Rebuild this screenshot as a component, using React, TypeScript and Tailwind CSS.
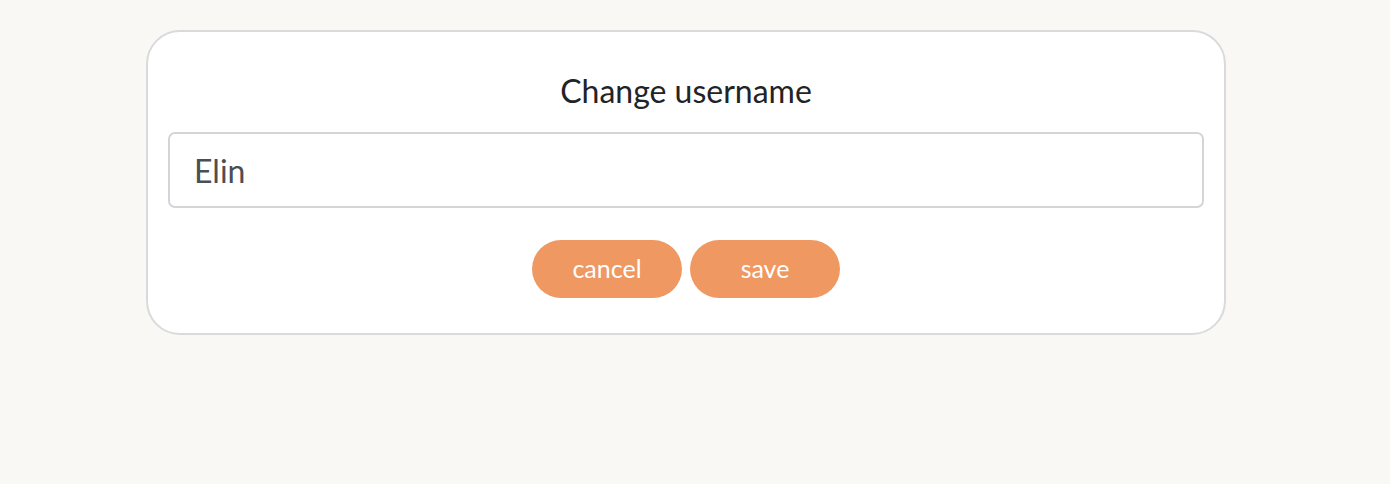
export default function App() {
  return (
    <div className="min-h-[484px] bg-[#f9f8f5] pt-[30px] font-['Lato','Liberation_Sans',sans-serif]">
      <div className="ml-[146px] w-[1080px] rounded-[34px] border-2 border-[#dadadc] bg-white px-[20px] pb-[35px] pt-[42px]">
        <h2 className="mb-[24px] text-center text-[32px] leading-[34px] font-normal text-[#222326]">
          Change username
        </h2>
        <input
          defaultValue="Elin"
          className="block h-[76px] w-full rounded-[7px] border-2 border-[#d3d5d8] px-[24px] text-[32px] text-[#4a4f55] outline-none"
        />
        <div className="mt-[32px] flex justify-center gap-[8px]">
          <button className="h-[58px] w-[150px] rounded-full bg-[#f09862] text-[25px] text-white">cancel</button>
          <button className="h-[58px] w-[150px] rounded-full bg-[#f09862] text-[25px] text-white">save</button>
        </div>
      </div>
    </div>
  );
}
